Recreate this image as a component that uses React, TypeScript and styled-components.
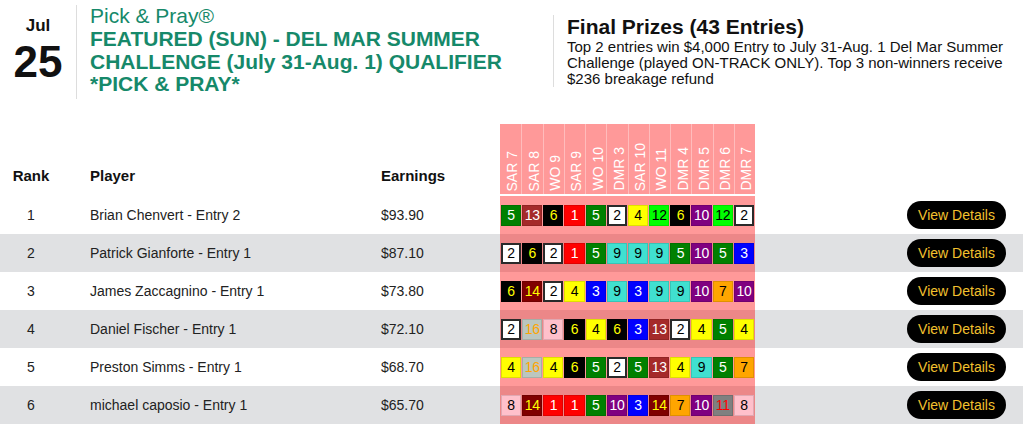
import styled, { createGlobalStyle } from 'styled-components'

const GlobalStyle = createGlobalStyle`
  body {
    margin: 0;
    font-family: "Liberation Sans", Arial, sans-serif;
    color: #111;
    background: #fff;
  }
`

const Page = styled.div`
  width: 1023px;
  height: 424px;
  overflow: hidden;
`

const Header = styled.header`
  display: flex;
  height: 124px;
`

const DateBox = styled.div`
  width: 77px;
  height: 94px;
  margin-top: 5px;
  border-right: 1px solid #dddddd;
  display: flex;
  flex-direction: column;
  align-items: center;
  padding-top: 12px;
  box-sizing: border-box;
`

const Month = styled.div`
  font-size: 17px;
  font-weight: 700;
  line-height: 18px;
`

const Day = styled.div`
  font-size: 44px;
  font-weight: 700;
  line-height: 46px;
  margin-top: 4px;
`

const TitleBox = styled.div`
  width: 476px;
  box-sizing: border-box;
  padding-left: 13px;
  padding-top: 4px;
  color: #16896a;
  font-size: 21px;
`

const Brand = styled.div`
  line-height: 24px;
`

const EventName = styled.div`
  font-weight: 700;
  line-height: 22.5px;
  width: 430px;
`

const PrizeBox = styled.div`
  margin-top: 15px;
  height: 72px;
  border-left: 1px solid #dddddd;
  padding-left: 13px;
  flex: 1;
`

const PrizeTitle = styled.div`
  font-size: 21px;
  font-weight: 700;
  line-height: 24px;
`

const PrizeText = styled.div`
  font-size: 15px;
  line-height: 16px;
  width: 445px;
`

const Row = styled.div<{ $shaded?: boolean }>`
  display: grid;
  grid-template-columns: 62px 319px 119px 255px 1fr;
  align-items: center;
  height: 38px;
  font-size: 14px;
  background: ${(p) => (p.$shaded ? '#e0e1e3' : '#fff')};
`

const HeadRow = styled(Row)`
  height: 70px;
  align-items: end;
  margin-bottom: 2px;
`

const HeadText = styled.div<{ $center?: boolean; $pad?: number }>`
  font-weight: 700;
  font-size: 15px;
  padding-bottom: 10px;
  padding-left: ${(p) => p.$pad || 0}px;
  text-align: ${(p) => (p.$center ? 'center' : 'left')};
`

const Cell = styled.div<{ $center?: boolean; $pad?: number }>`
  text-align: ${(p) => (p.$center ? 'center' : 'left')};
  padding-left: ${(p) => p.$pad || 0}px;
  color: #222;
`

const RaceHead = styled.div`
  align-self: stretch;
  display: grid;
  grid-template-columns: repeat(12, 1fr);
  background: rgba(255, 0, 0, 0.4);
`

const RaceLabel = styled.div`
  border-left: 1px solid rgba(255, 255, 255, 0.35);
  display: flex;
  justify-content: center;
  align-items: flex-end;
  padding-bottom: 3px;
  padding-left: 3px;
  &:first-child {
    border-left: none;
  }
  span {
    writing-mode: vertical-rl;
    transform: rotate(180deg);
    color: #fff;
    font-size: 14px;
    line-height: 16px;
    white-space: nowrap;
  }
`

const Picks = styled.div`
  align-self: stretch;
  display: grid;
  grid-template-columns: repeat(12, 1fr);
  gap: 1px;
  padding: 0 1px;
  align-items: center;
  background: rgba(255, 0, 0, 0.4);
`

const Pick = styled.div<{ $bg: string; $fg: string; $boxed?: boolean }>`
  height: 21px;
  box-sizing: border-box;
  display: flex;
  align-items: center;
  justify-content: center;
  font-size: 14px;
  letter-spacing: -0.3px;
  background: ${(p) => p.$bg};
  color: ${(p) => p.$fg};
  border: ${(p) => (p.$boxed ? '2px solid #2a2a2a' : '1px solid rgba(0,0,0,0.12)')};
`

const Action = styled.div`
  display: flex;
  justify-content: flex-end;
  padding-right: 17px;
`

const DetailsButton = styled.button`
  width: 99px;
  height: 28px;
  border: none;
  border-radius: 14px;
  background: #000;
  color: #f2c12e;
  font-family: inherit;
  font-size: 14px;
  cursor: pointer;
`

const colors: Record<number, [string, string]> = {
  1: ['#ff0000', '#ffffff'],
  2: ['#ffffff', '#000000'],
  3: ['#0000ff', '#ffffff'],
  4: ['#ffff00', '#000000'],
  5: ['#008000', '#ffffff'],
  6: ['#000000', '#ffff00'],
  7: ['#ffa500', '#000000'],
  8: ['#ffc0cb', '#000000'],
  9: ['#40e0d0', '#000000'],
  10: ['#800080', '#ffffff'],
  11: ['#808080', '#ff0000'],
  12: ['#00ff00', '#000000'],
  13: ['#a52a2a', '#ffffff'],
  14: ['#800000', '#ffff00'],
  16: ['#bcc6bf', '#ffa500'],
}

const races = ['SAR 7', 'SAR 8', 'WO 9', 'SAR 9', 'WO 10', 'DMR 3', 'SAR 10', 'WO 11', 'DMR 4', 'DMR 5', 'DMR 6', 'DMR 7']

const entries = [
  { rank: 1, player: 'Brian Chenvert - Entry 2', earnings: '$93.90', picks: [5, 13, 6, 1, 5, 2, 4, 12, 6, 10, 12, 2] },
  { rank: 2, player: 'Patrick Gianforte - Entry 1', earnings: '$87.10', picks: [2, 6, 2, 1, 5, 9, 9, 9, 5, 10, 5, 3] },
  { rank: 3, player: 'James Zaccagnino - Entry 1', earnings: '$73.80', picks: [6, 14, 2, 4, 3, 9, 3, 9, 9, 10, 7, 10] },
  { rank: 4, player: 'Daniel Fischer - Entry 1', earnings: '$72.10', picks: [2, 16, 8, 6, 4, 6, 3, 13, 2, 4, 5, 4] },
  { rank: 5, player: 'Preston Simms - Entry 1', earnings: '$68.70', picks: [4, 16, 4, 6, 5, 2, 5, 13, 4, 9, 5, 7] },
  { rank: 6, player: 'michael caposio - Entry 1', earnings: '$65.70', picks: [8, 14, 1, 1, 5, 10, 3, 14, 7, 10, 11, 8] },
]

const App = () => {
  return (
    <Page>
      <GlobalStyle />
      <Header>
        <DateBox>
          <Month>Jul</Month>
          <Day>25</Day>
        </DateBox>
        <TitleBox>
          <Brand>Pick &amp; Pray®</Brand>
          <EventName>FEATURED (SUN) - DEL MAR SUMMER CHALLENGE (July 31-Aug. 1) QUALIFIER *PICK &amp; PRAY*</EventName>
        </TitleBox>
        <PrizeBox>
          <PrizeTitle>Final Prizes (43 Entries)</PrizeTitle>
          <PrizeText>
            Top 2 entries win $4,000 Entry to July 31-Aug. 1 Del Mar Summer Challenge (played ON-TRACK ONLY). Top 3
            non-winners receive $236 breakage refund
          </PrizeText>
        </PrizeBox>
      </Header>

      <HeadRow>
        <HeadText $center>Rank</HeadText>
        <HeadText $pad={28}>Player</HeadText>
        <HeadText>Earnings</HeadText>
        <RaceHead>
          {races.map((r) => (
            <RaceLabel key={r}>
              <span>{r}</span>
            </RaceLabel>
          ))}
        </RaceHead>
        <div />
      </HeadRow>

      {entries.map((e, i) => (
        <Row key={e.rank} $shaded={i % 2 === 1}>
          <Cell $center>{e.rank}</Cell>
          <Cell $pad={28}>{e.player}</Cell>
          <Cell>{e.earnings}</Cell>
          <Picks>
            {e.picks.map((n, j) => (
              <Pick key={j} $bg={colors[n][0]} $fg={colors[n][1]} $boxed={n === 2}>
                {n}
              </Pick>
            ))}
          </Picks>
          <Action>
            <DetailsButton>View Details</DetailsButton>
          </Action>
        </Row>
      ))}
    </Page>
  )
}

export default App
